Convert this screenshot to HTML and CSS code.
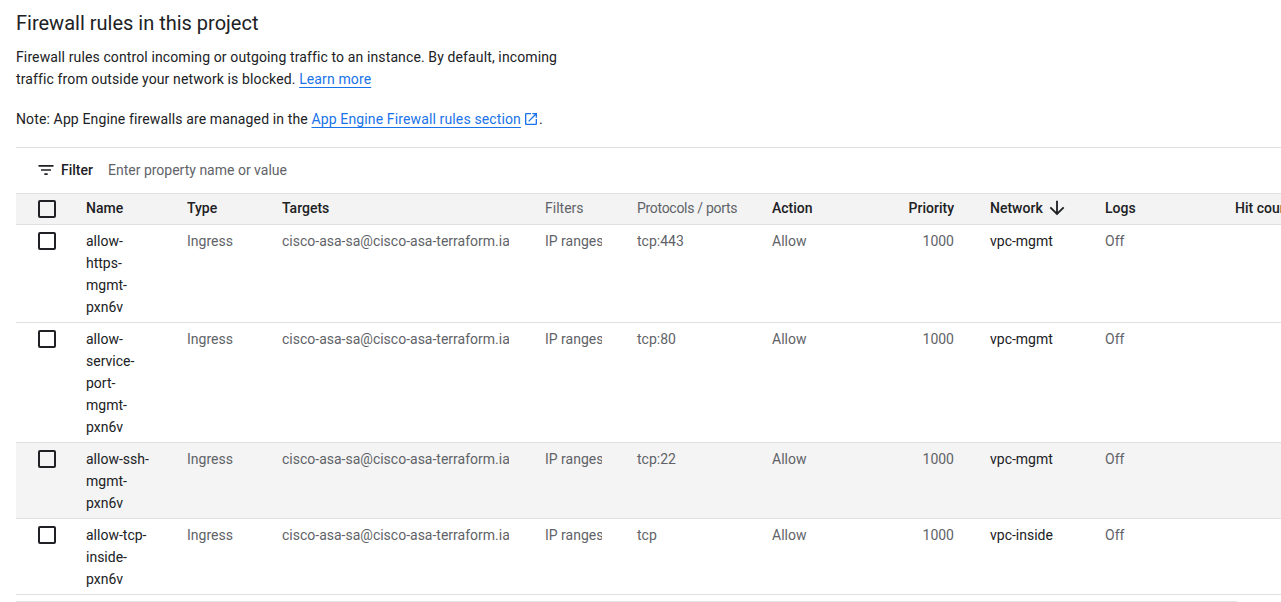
FILE: index.html
```html
<!DOCTYPE html>
<html lang="en">
<head>
<meta charset="utf-8">
<title>Firewall rules</title>
<link rel="stylesheet" href="styles.css">
</head>
<body>
<main class="page">
  <h1 class="title">Firewall rules in this project</h1>
  <p class="intro">Firewall rules control incoming or outgoing traffic to an instance. By default, incoming traffic from outside your network is blocked. <a class="link" href="#">Learn more</a></p>
  <p class="note">Note: App Engine firewalls are managed in the <a class="link" href="#"><span class="link-text">App Engine Firewall rules section</span><svg class="ext-icon" viewBox="0 0 24 24" width="16" height="16"><path fill="currentColor" d="M19 19H5V5h7V3H5c-1.11 0-2 .9-2 2v14c0 1.1.89 2 2 2h14c1.1 0 2-.9 2-2v-7h-2v7zM14 3v2h3.59l-9.830 9.83 1.41 1.41L19 6.41V10h2V3h-7z"/></svg></a>.</p>

  <div class="table-wrap">
    <div class="filter-bar">
      <svg class="filter-icon" viewBox="0 0 24 24" width="20" height="20"><path fill="currentColor" d="M10 18h4v-2h-4v2zM3 6v2h18V6H3zm3 7h12v-2H6v2z"/></svg>
      <span class="filter-label">Filter</span>
      <span class="filter-input">Enter property name or value</span>
    </div>
    <table class="grid">
      <colgroup>
        <col class="c-cb"><col class="c-name"><col class="c-type"><col class="c-targets"><col class="c-filters"><col class="c-proto"><col class="c-action"><col class="c-prio"><col class="c-net"><col class="c-logs"><col class="c-hit">
      </colgroup>
      <thead>
        <tr>
          <th class="cb-cell"><span class="cb"></span></th>
          <th>Name</th>
          <th>Type</th>
          <th>Targets</th>
          <th class="muted-h">Filters</th>
          <th class="muted-h proto-h">Protocols / ports</th>
          <th>Action</th>
          <th class="num">Priority</th>
          <th><span class="sort">Network<svg class="arrow" viewBox="0 0 24 24" width="22" height="22"><path fill="currentColor" d="M20 12l-1.41-1.41L13 16.17V4h-2v12.17l-5.58-5.59L4 12l8 8 8-8z"/></svg></span></th>
          <th>Logs</th>
          <th>Hit count</th>
        </tr>
      </thead>
      <tbody>
        <tr>
          <td class="cb-cell"><span class="cb"></span></td>
          <td class="dark name">allow-https-mgmt-pxn6v</td>
          <td>Ingress</td>
          <td class="targets"><div class="clip">cisco-asa-sa@cisco-asa-terraform.iam.gserviceaccount.com</div></td>
          <td class="filters"><div class="clip">IP ranges: 0.0.0.0/0</div></td>
          <td>tcp:443</td>
          <td>Allow</td>
          <td class="num">1000</td>
          <td class="dark">vpc-mgmt</td>
          <td>Off</td>
          <td></td>
        </tr>
        <tr>
          <td class="cb-cell"><span class="cb"></span></td>
          <td class="dark name">allow-service-port-mgmt-pxn6v</td>
          <td>Ingress</td>
          <td class="targets"><div class="clip">cisco-asa-sa@cisco-asa-terraform.iam.gserviceaccount.com</div></td>
          <td class="filters"><div class="clip">IP ranges: 0.0.0.0/0</div></td>
          <td>tcp:80</td>
          <td>Allow</td>
          <td class="num">1000</td>
          <td class="dark">vpc-mgmt</td>
          <td>Off</td>
          <td></td>
        </tr>
        <tr class="hover">
          <td class="cb-cell"><span class="cb"></span></td>
          <td class="dark name">allow-ssh-mgmt-pxn6v</td>
          <td>Ingress</td>
          <td class="targets"><div class="clip">cisco-asa-sa@cisco-asa-terraform.iam.gserviceaccount.com</div></td>
          <td class="filters"><div class="clip">IP ranges: 0.0.0.0/0</div></td>
          <td>tcp:22</td>
          <td>Allow</td>
          <td class="num">1000</td>
          <td class="dark">vpc-mgmt</td>
          <td>Off</td>
          <td></td>
        </tr>
        <tr>
          <td class="cb-cell"><span class="cb"></span></td>
          <td class="dark name">allow-tcp-inside-pxn6v</td>
          <td>Ingress</td>
          <td class="targets"><div class="clip">cisco-asa-sa@cisco-asa-terraform.iam.gserviceaccount.com</div></td>
          <td class="filters"><div class="clip">IP ranges: 0.0.0.0/0</div></td>
          <td>tcp</td>
          <td>Allow</td>
          <td class="num">1000</td>
          <td class="dark">vpc-inside</td>
          <td>Off</td>
          <td></td>
        </tr>
      </tbody>
    </table>
    <div class="hscroll"></div>
  </div>
</main>
</body>
</html>
```

FILE: styles.css
```css
* { box-sizing: border-box; }

html, body {
  margin: 0;
  padding: 0;
  background: #fff;
  overflow: hidden;
}

body {
  font-family: Roboto, "Liberation Sans", Arial, sans-serif;
  font-size: 14px;
  color: #202124;
}

.page {
  padding: 9px 0 0 16px;
}

.title {
  margin: 0;
  font-size: 20px;
  line-height: 28px;
  font-weight: 400;
  color: #202124;
}

.intro {
  margin: 9px 0 0;
  max-width: 560px;
  line-height: 22px;
  letter-spacing: 0.12px;
}

.note {
  margin: 18px 0 0;
  line-height: 22px;
  letter-spacing: 0.13px;
}

.link {
  color: #1a73e8;
  text-decoration: underline;
  text-underline-offset: 3px;
}

.note .link {
  text-decoration: none;
}

.link-text {
  text-decoration: underline;
  text-underline-offset: 3px;
}

.ext-icon {
  vertical-align: -3px;
  margin-left: 2px;
}

.table-wrap {
  margin-top: 17px;
  overflow: hidden;
}

.filter-bar {
  display: flex;
  align-items: center;
  height: 46px;
  border-top: 1px solid #e0e0e0;
  padding: 0 0 2px 20px;
}

.filter-icon {
  color: #202124;
  flex: none;
}

.filter-label {
  margin-left: 5px;
  font-weight: 500;
  color: #202124;
}

.filter-input {
  margin-left: 15px;
  color: #5f6368;
}

.grid {
  table-layout: fixed;
  border-collapse: collapse;
  width: 1339px;
}

.c-cb { width: 70px; }
.c-name { width: 101px; }
.c-type { width: 95px; }
.c-targets { width: 263px; }
.c-filters { width: 92px; }
.c-proto { width: 135px; }
.c-action { width: 110px; }
.c-prio { width: 108px; }
.c-net { width: 115px; }
.c-logs { width: 130px; }
.c-hit { width: 120px; }

.grid th,
.grid td {
  text-align: left;
  vertical-align: top;
  padding: 5px 29px 4px 0;
  line-height: 22px;
  border-bottom: 1px solid #e0e0e0;
}

.grid th {
  padding-top: 3px;
  padding-bottom: 5px;
  background: #f3f3f3;
  border-top: 1px solid #e0e0e0;
  font-weight: 500;
  color: #202124;
  white-space: nowrap;
  overflow: hidden;
}

.grid th.muted-h {
  font-weight: 400;
  color: #5f6368;
}

.grid th.proto-h {
  letter-spacing: -0.3px;
}

.grid td {
  color: #5f6368;
}

.grid td.dark {
  color: #202124;
}

.grid td.name {
  padding-right: 33px;
}

.grid td.targets {
  padding-right: 36px;
}

.grid td.filters {
  padding-right: 35px;
}

.grid .num {
  text-align: right;
  padding-right: 36px;
}

.grid .cb-cell {
  padding-left: 22px;
  padding-right: 0;
}

.cb {
  display: inline-block;
  width: 18px;
  height: 18px;
  border: 2px solid #202124;
  border-radius: 2px;
  vertical-align: middle;
  margin-top: -2px;
}

.grid th .cb {
  margin-top: 0;
}

.clip {
  overflow: hidden;
  white-space: nowrap;
}

.grid tr.hover td {
  background: #f4f4f4;
}

.sort {
  display: inline-flex;
  align-items: center;
}

.arrow {
  margin-left: 3px;
  color: #202124;
}

.hscroll {
  margin-top: 6px;
  width: 1221px;
  height: 2px;
  background: #e3e3e3;
}
```
